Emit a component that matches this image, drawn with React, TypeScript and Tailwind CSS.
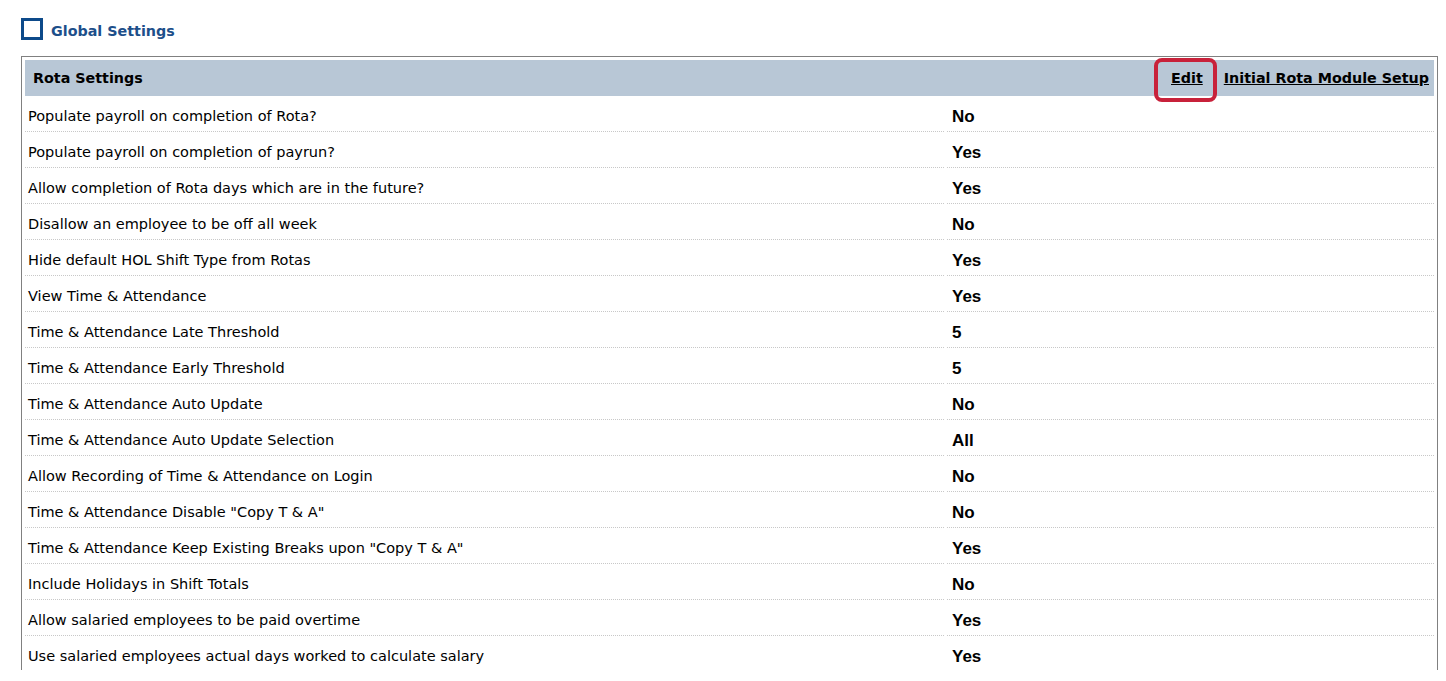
import React from "react";

// rows of the rota settings table: label + value
const rows: [string, string][] = [
  ["Populate payroll on completion of Rota?", "No"],
  ["Populate payroll on completion of payrun?", "Yes"],
  ["Allow completion of Rota days which are in the future?", "Yes"],
  ["Disallow an employee to be off all week", "No"],
  ["Hide default HOL Shift Type from Rotas", "Yes"],
  ["View Time & Attendance", "Yes"],
  ["Time & Attendance Late Threshold", "5"],
  ["Time & Attendance Early Threshold", "5"],
  ["Time & Attendance Auto Update", "No"],
  ["Time & Attendance Auto Update Selection", "All"],
  ["Allow Recording of Time & Attendance on Login", "No"],
  ['Time & Attendance Disable "Copy T & A"', "No"],
  ['Time & Attendance Keep Existing Breaks upon "Copy T & A"', "Yes"],
  ["Include Holidays in Shift Totals", "No"],
  ["Allow salaried employees to be paid overtime", "Yes"],
  ["Use salaried employees actual days worked to calculate salary", "Yes"],
];

const tahoma = "font-['DejaVu_Sans',sans-serif]";

export default function App() {
  return (
    <div className="h-[681px] overflow-hidden bg-white pl-[21px] pt-[18px]">
      <div className="flex h-[22px] items-center gap-[8px]">
        <div className="h-[22px] w-[22px] border-[3px] border-[#0d4a8a]" />
        <span className={`${tahoma} translate-y-[2px] text-[14.3px] font-bold leading-[22px] text-[#1d4f8a]`}>Global Settings</span>
      </div>

      {/* table is cut off at the bottom of the capture */}
      <div className="mt-[16px] h-[614px] w-[1417px] overflow-hidden">
        <table className="w-[1417px] table-fixed border-separate border-spacing-[3px] border border-[#808080]">
          <colgroup>
            <col className="w-[919px]" />
            <col />
          </colgroup>
          <thead>
            <tr>
              <th colSpan={2} className="h-[36px] bg-[#b8c7d6] p-0 pt-[2px] text-left">
                <div className="flex items-center justify-between pl-[8px] pr-[5px]">
                  <span className={`${tahoma} text-[14.3px] font-bold text-black`}>Rota Settings</span>
                  <div className={`${tahoma} flex items-center gap-[21px] text-[14.3px] font-bold text-black`}>
                    <span className="relative">
                      <a href="#" className="underline">Edit</a>
                      <span className="pointer-events-none absolute -left-[17px] -right-[14px] -top-[10px] -bottom-[12px] rounded-[8px] border-[4px] border-[#c8213a]" />
                    </span>
                    <a href="#" className="underline">Initial Rota Module Setup</a>
                  </div>
                </div>
              </th>
            </tr>
          </thead>
          <tbody>
            {rows.map(([label, value]) => (
              <tr key={label}>
                <td className={`${tahoma} h-[33px] border-b border-dotted border-[#c8c8c8] p-0 pl-[3px] pt-[4px] align-middle text-[14.5px] text-black`}>
                  {label}
                </td>
                <td className="h-[33px] border-b border-dotted border-[#c8c8c8] p-0 pl-[5px] pt-[4px] align-middle font-['Liberation_Sans',Arial,sans-serif] text-[17px] font-bold text-black">
                  {value}
                </td>
              </tr>
            ))}
          </tbody>
        </table>
      </div>
    </div>
  );
}
